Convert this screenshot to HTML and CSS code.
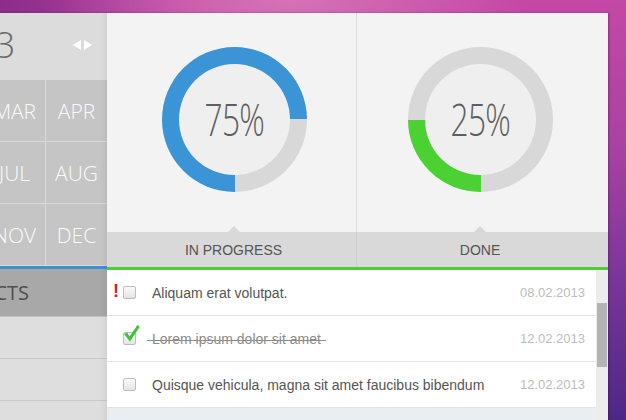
FILE: index.html
```html
<!DOCTYPE html>
<html>
<head>
<meta charset="utf-8">
<link rel="stylesheet" href="styles.css">
</head>
<body>
<div class="frame">
  <aside class="side">
    <div class="side-inner">
      <div class="year-row">
        <span class="year">2013</span>
        <span class="arrows"><span class="arr-l"></span><span class="arr-r"></span></span>
      </div>
      <div class="months">
        <div class="month">MAR</div><div class="month">APR</div>
        <div class="month">JUL</div><div class="month">AUG</div>
        <div class="month">NOV</div><div class="month">DEC</div>
      </div>
      <div class="side-accent"></div>
      <div class="side-title">PROJECTS</div>
      <div class="side-item"></div>
      <div class="side-item"></div>
      <div class="side-item"></div>
    </div>
  </aside>
  <main class="main">
    <div class="charts">
      <div class="chart chart-a">
        <div class="donut donut-blue"><div class="donut-hole"><span class="pct">75%</span></div></div>
      </div>
      <div class="chart chart-b">
        <div class="donut donut-green"><div class="donut-hole"><span class="pct">25%</span></div></div>
      </div>
    </div>
    <div class="labels">
      <div class="label label-a">IN PROGRESS</div>
      <div class="label label-b">DONE</div>
    </div>
    <div class="accent"></div>
    <div class="list-wrap">
      <ul class="tasks">
        <li class="task">
          <span class="flag">!</span>
          <span class="box"></span>
          <span class="task-text">Aliquam erat volutpat.</span>
          <span class="date">08.02.2013</span>
        </li>
        <li class="task">
          <span class="flag"></span>
          <span class="box checked">
            <svg class="tick" width="16" height="17" viewBox="0 0 16 17"><polygon points="0,9 3,7.4 5.6,11.6 13.4,0 15.8,1.8 6,16.6" fill="#3ec33a"/></svg>
          </span>
          <span class="task-text done"><span class="strike">Lorem ipsum dolor sit amet</span></span>
          <span class="date">12.02.2013</span>
        </li>
        <li class="task">
          <span class="flag"></span>
          <span class="box"></span>
          <span class="task-text">Quisque vehicula, magna sit amet faucibus bibendum</span>
          <span class="date">12.02.2013</span>
        </li>
        <li class="task task-hl"></li>
      </ul>
      <div class="scrollbar"><div class="thumb"></div></div>
    </div>
  </main>
</div>
</body>
</html>
```

FILE: styles.css
```css
* { box-sizing: border-box; }
html, body { margin: 0; padding: 0; }
body {
  width: 626px;
  height: 420px;
  overflow: hidden;
  font-family: "Liberation Sans", Arial, sans-serif;
  background:
    radial-gradient(ellipse 240px 90px at 290px 0, rgba(214,120,182,0.9), rgba(214,120,182,0) 100%),
    linear-gradient(90deg, rgba(120,36,130,0.75) 0, rgba(120,36,130,0) 35%),
    linear-gradient(180deg, #c448a6 0%, #a842a2 35%, #7c369a 65%, #4c2884 100%);
}
.frame {
  margin-top: 13px;
  width: 608px;
  height: 407px;
  display: flex;
  box-shadow: 1px 0 2px rgba(40,0,50,0.35);
}

/* side panel */
.side {
  width: 107px;
  flex: none;
  overflow: hidden;
  position: relative;
  background: #dedede;
}
.side::after {
  content: "";
  position: absolute;
  top: 0; right: 0; bottom: 0;
  width: 7px;
  background: linear-gradient(90deg, rgba(0,0,0,0), rgba(0,0,0,0.05));
}
.side-inner {
  width: 123px;
  margin-left: -16px;
}
.year-row {
  height: 67px;
  background: #dcdcdc;
  display: flex;
  align-items: center;
  padding-left: 0;
}
.year {
  font-family: "Open Sans", sans-serif;
  font-weight: 300;
  font-size: 36px;
  color: #6a6a6a;
  letter-spacing: -1px;
  margin-top: -4px;
  margin-left: -48px;
}
.arrows {
  margin-left: auto;
  margin-right: 15px;
  display: flex;
  gap: 3px;
  margin-top: -3px;
}
.arr-l, .arr-r {
  width: 0; height: 0;
  border-top: 5px solid transparent;
  border-bottom: 5px solid transparent;
}
.arr-l { border-right: 8px solid #fff; }
.arr-r { border-left: 8px solid #fff; }
.months {
  display: grid;
  grid-template-columns: repeat(2, 61px);
  grid-auto-rows: 61px;
  gap: 1px;
  background: #d9d9d9;
  padding-bottom: 1px;
}
.month {
  background: #c5c5c5;
  color: #fafafa;
  font-family: "Open Sans", sans-serif;
  font-weight: 300;
  font-size: 21px;
  display: flex;
  align-items: center;
  justify-content: center;
}
.side-accent { height: 3px; background: #3a92d4; }
.side-title {
  height: 48px;
  background: #a8a8a8;
  color: #4e4e4e;
  font-family: "Open Sans", sans-serif;
  font-size: 20px;
  display: flex;
  align-items: center;
  justify-content: flex-end;
  padding-right: 78px;
  white-space: nowrap;
  border-bottom: 1px solid #c4c4c4;
}
.side-item {
  height: 42px;
  background: #dedede;
  border-bottom: 1px solid #c9c9c9;
}

/* main */
.main {
  width: 501px;
  flex: none;
  display: flex;
  flex-direction: column;
  background: #f3f3f3;
}
.charts {
  height: 219px;
  display: grid;
  grid-template-columns: 250px 251px;
}
.chart {
  display: flex;
  justify-content: center;
  padding-top: 34px;
}
.chart-a { padding-left: 5px; border-right: 1px solid #dcdcdc; }
.chart-b { padding-right: 5px; }
.donut {
  width: 145px;
  height: 145px;
  border-radius: 50%;
  display: flex;
  align-items: center;
  justify-content: center;
}
.donut-blue { background: conic-gradient(from 180deg, #3a94d6 0 75%, #d8d8d8 75% 100%); }
.donut-green { background: conic-gradient(from 180deg, #4bd134 0 25%, #d8d8d8 25% 100%); }
.donut-hole {
  width: 111px;
  height: 111px;
  border-radius: 50%;
  background: #efefef;
  display: flex;
  align-items: center;
  justify-content: center;
}
.pct {
  font-family: "Open Sans", sans-serif;
  font-weight: 300;
  font-size: 44px;
  color: #5f5f5f;
  letter-spacing: -1px;
  transform: scaleX(0.72);
  margin-top: -2px;
}
.labels {
  height: 35px;
  display: grid;
  grid-template-columns: 250px 251px;
  background: #d9d9d9;
}
.label {
  position: relative;
  display: flex;
  align-items: center;
  justify-content: center;
  font-size: 14px;
  color: #555;
}
.label::before {
  content: "";
  position: absolute;
  top: -6px;
  left: 50%;
  margin-left: -6px;
  border-left: 6px solid transparent;
  border-right: 6px solid transparent;
  border-bottom: 6px solid #d9d9d9;
}
.label-a { padding-left: 4px; border-right: 1px solid #cfcfcf; }
.label-b { padding-right: 5px; }
.label-a::before { margin-left: -4px; }
.label-b::before { margin-left: -9px; }
.accent { height: 3px; background: #4ccf35; }

.list-wrap {
  flex: 1;
  display: flex;
  overflow: hidden;
}
.tasks {
  list-style: none;
  margin: 0;
  padding: 0;
  width: 489px;
  background: #fff;
}
.task {
  height: 46px;
  border-bottom: 1px solid #e2e2e2;
  display: flex;
  align-items: center;
  padding-left: 6px;
  padding-right: 11px;
}
.task-hl { background: #e9eef2; border-bottom: 0; }
.flag {
  width: 10px;
  color: #d8201f;
  font-weight: bold;
  font-size: 18px;
  margin-top: -2px;
}
.box {
  width: 13px;
  height: 13px;
  border: 1px solid #bdbdbd;
  border-radius: 2px;
  background: linear-gradient(#fbfbfb, #e4e4e4);
  position: relative;
  flex: none;
}
.tick {
  position: absolute;
  left: 0;
  top: -8px;
}
.task-text {
  flex: 1;
  margin-left: 16px;
  font-size: 14px;
  color: #555;
  white-space: nowrap;
}
.task-text.done { color: #8c8c8c; }
.strike { position: relative; }
.strike::after {
  content: "";
  position: absolute;
  left: -5px;
  right: -5px;
  top: 9px;
  height: 1px;
  background: #8c8c8c;
}
.date {
  font-size: 13px;
  color: #bcbcbc;
}
.scrollbar {
  width: 12px;
  background: #ececec;
  padding: 33px 1px 0 1px;
}
.thumb {
  height: 64px;
  background: #b4b4b4;
}
```
